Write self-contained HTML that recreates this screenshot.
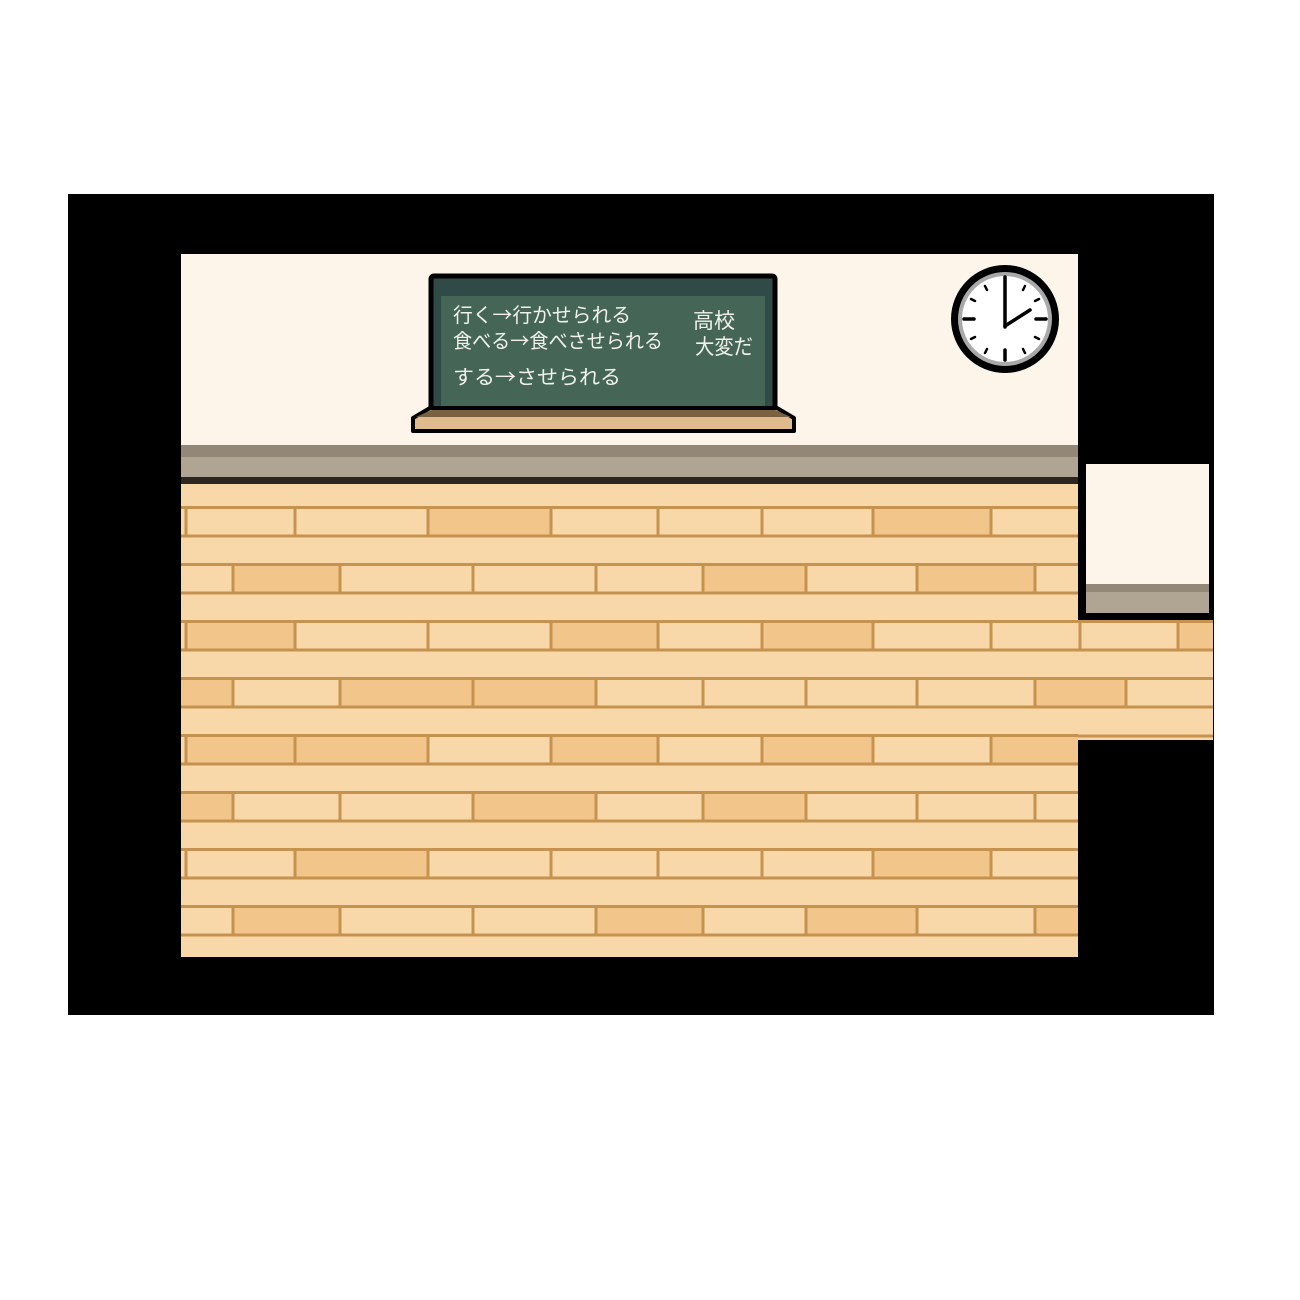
<!DOCTYPE html>
<html><head><meta charset="utf-8"><style>
html,body{margin:0;padding:0;background:#fff;width:1300px;height:1300px;overflow:hidden}
svg{display:block}
</style></head><body>
<svg id="s" width="1300" height="1300" viewBox="0 0 1300 1300" xmlns="http://www.w3.org/2000/svg">
<rect x="68" y="194" width="1146" height="821" fill="#000"/>
<rect x="181" y="254" width="897" height="192" fill="#fef5ea"/>
<rect x="181" y="445" width="897" height="12" fill="#938878"/>
<rect x="181" y="457" width="897" height="20" fill="#b0a493"/>
<rect x="181" y="477" width="897" height="7" fill="#2d2722"/>
<g id="floor"></g>
<rect x="1078" y="455" width="136" height="165" fill="#000"/>
<rect x="1086" y="464" width="123" height="121" fill="#fef5ea"/>
<rect x="1086" y="584" width="123" height="8" fill="#938878"/>
<rect x="1086" y="592" width="123" height="21" fill="#b0a493"/>
<rect x="431" y="276" width="344" height="134" rx="3" fill="#2f4a47" stroke="#000" stroke-width="5"/>
<rect x="441" y="296" width="324" height="110" fill="#456657"/>
<path d="M413 418 L430 408 L777 408 L794 418 L794 431 L413 431 Z" fill="#e0bb8e" stroke="#000" stroke-width="4" stroke-linejoin="round"/>
<path d="M416 417 L432 410 L775 410 L791 417 Z" fill="#7a6241"/>
<g font-family="'Noto Sans CJK JP','WenQuanYi Zen Hei',sans-serif" fill="#f1f1ea" font-size="20">
<text x="453" y="322" textLength="178" lengthAdjust="spacingAndGlyphs">行く→行かせられる</text>
<text x="453" y="348" textLength="210" lengthAdjust="spacingAndGlyphs">食べる→食べさせられる</text>
<text x="453" y="384" textLength="168" lengthAdjust="spacingAndGlyphs">する→させられる</text>
<text x="693" y="328" font-size="21">高校</text>
<text x="695" y="354" font-size="21" textLength="58" lengthAdjust="spacingAndGlyphs">大変だ</text>
</g>
<circle cx="1005" cy="319" r="54" fill="#000"/>
<circle cx="1005" cy="319" r="47" fill="#a9a9a9"/>
<circle cx="1005" cy="319" r="43" fill="#fff"/>
<g stroke="#000" stroke-width="3.5" stroke-linecap="round">
<line x1="1005" y1="277" x2="1005" y2="327"/>
<line x1="1005" y1="326" x2="1030" y2="310"/>
<line x1="964" y1="319" x2="974" y2="319"/>
<line x1="1036" y1="319" x2="1046" y2="319"/>
<line x1="1005" y1="350" x2="1005" y2="360"/>
<g stroke-width="2.5">
<line x1="1025" y1="286" x2="1023" y2="290"/>
<line x1="1039" y1="299" x2="1035" y2="301"/>
<line x1="1039" y1="339" x2="1035" y2="337"/>
<line x1="1025" y1="353" x2="1023" y2="349"/>
<line x1="985" y1="353" x2="987" y2="349"/>
<line x1="971" y1="339" x2="975" y2="337"/>
<line x1="971" y1="299" x2="975" y2="301"/>
<line x1="985" y1="286" x2="987" y2="290"/>
</g></g>
</svg>
<script>
(function(){
var g=document.getElementById('floor'),ns='http://www.w3.org/2000/svg';
function r(x,y,w,h,c){var e=document.createElementNS(ns,'rect');e.setAttribute('x',x);e.setAttribute('y',y);e.setAttribute('width',w);e.setAttribute('height',h);e.setAttribute('fill',c);g.appendChild(e);}
var L='#f8d8a9',D='#f2c68a',S='#c6924f';
r(181,484,897,473,L);r(1078,620,135,120,L);
var A=[186,295,428,551,658,762,873,991,1080,1178],B=[233,340,473,596,703,806,917,1035,1126];
var dark=[[428,873],[233,703,917],[186,551,762,1178],[181,340,473,1035],[186,295,551,762,991],[181,473,703],[295,873],[233,596,806,1035]];
for(var k=0;k<8;k++){
 var yy=506+57*k, s=(k%2==0)?A:B, ty=yy+3, h=26;
 var xe=(k==2||k==3)?1213:1078;
 var pts=[181].concat(s.filter(function(v){return v<xe;})).concat([xe]);
 for(var i=0;i<pts.length-1;i++){ if(dark[k].indexOf(pts[i])>=0) r(pts[i],ty,pts[i+1]-pts[i],h,D); }
 for(var i=1;i<pts.length-1;i++) r(pts[i]-1.5,ty,3,h,S);
 r(181,yy,xe-181,3,S); r(181,yy+28.5,xe-181,3,S);
}
r(1078,734.5,135,3,S);
})();
</script>
</body></html>
